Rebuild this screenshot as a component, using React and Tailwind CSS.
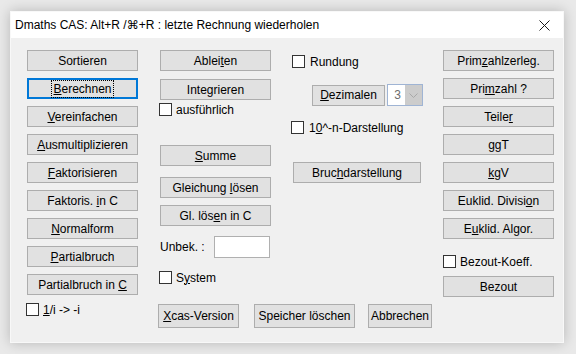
const FONT = { fontFamily: '"Liberation Sans", Arial, "DejaVu Sans", sans-serif' };

function Btn({ children, className = "", focused = false }) {
  return (
    <div
      className={`flex items-center justify-center bg-[#e1e1e1] text-[12px] text-black leading-none select-none whitespace-pre ${
        focused ? "border-2 border-[#0078d7]" : "border border-[#adadad]"
      } ${className}`}
    >
      {focused ? (
        <span className="outline outline-1 outline-dotted outline-black px-[1px] py-[2px]">{children}</span>
      ) : (
        <span>{children}</span>
      )}
    </div>
  );
}

function Check({ children, className = "" }) {
  return (
    <div className={`flex items-center gap-[4px] h-[13px] text-[12px] text-black leading-none whitespace-pre ${className}`}>
      <div className="w-[13px] h-[13px] bg-white border border-[#333333] shrink-0" />
      <span>{children}</span>
    </div>
  );
}

export default function App() {
  return (
    <div className="w-[576px] h-[354px] bg-[#e9e9e9] pt-[11px] pl-[10px] overflow-hidden" style={FONT}>
      <div className="w-[554px] h-[332px] flex flex-col bg-[#f0f0f0] border border-[#f8f8f8] shadow-[0_0_12px_rgba(0,0,0,0.22)]">
        {/* title bar */}
        <div className="h-[26px] bg-white flex items-center justify-between pl-[4px] pr-[13px]">
          <span className="text-[12px] text-black">Dmaths CAS: Alt+R /⌘+R : letzte Rechnung wiederholen</span>
          <svg width="11" height="11" viewBox="0 0 11 11">
            <path d="M0.5 0.5 L10.5 10.5 M10.5 0.5 L0.5 10.5" stroke="#1a1a1a" strokeWidth="1" />
          </svg>
        </div>

        {/* body */}
        <div className="flex pl-[16px] pt-[12px]">
          {/* column 1 */}
          <div className="w-[111px] flex flex-col gap-[7px]">
            <Btn className="h-[21px]">Sortieren</Btn>
            <Btn className="h-[21px]" focused>
              <u>B</u>erechnen
            </Btn>
            <Btn className="h-[21px]">
              <u>V</u>ereinfachen
            </Btn>
            <Btn className="h-[21px]">
              <u>A</u>usmultiplizieren
            </Btn>
            <Btn className="h-[21px]">
              <u>F</u>aktorisieren
            </Btn>
            <Btn className="h-[21px]">
              Faktoris. <u>i</u>n C
            </Btn>
            <Btn className="h-[21px]">
              <u>N</u>ormalform
            </Btn>
            <Btn className="h-[21px]">
              <u>P</u>artialbruch
            </Btn>
            <Btn className="h-[21px]">
              Partialbruch in <u>C</u>
            </Btn>
            <Check className="-ml-px mt-px">
              <u>1</u>/i -&gt; -i
            </Check>
          </div>

          {/* middle area */}
          <div className="ml-[20px] flex flex-col">
            <div className="flex">
              {/* column 2 */}
              <div className="ml-[2px] w-[111px] flex flex-col">
                <Btn className="h-[21px]">
                  Ablei<u>t</u>en
                </Btn>
                <Btn className="h-[21px] mt-[8px]">
                  Inte<u>g</u>rieren
                </Btn>
                <Check className="-ml-px mt-[3px]">ausführlich</Check>
                <Btn className="h-[21px] mt-[29px]">
                  <u>S</u>umme
                </Btn>
                <Btn className="h-[21px] mt-[11px]">
                  Gleichung <u>l</u>ösen
                </Btn>
                <Btn className="h-[21px] mt-[7px]">
                  Gl. lös<u>e</u>n in C
                </Btn>
                <div className="mt-[10px] flex items-center justify-between h-[22px]">
                  <span className="text-[12px] text-black">Unbek. :</span>
                  <div className="w-[56px] h-[22px] bg-white border border-[#b0b0b0] mr-px" />
                </div>
                <Check className="-ml-px mt-[13px]">
                  S<u>y</u>stem
                </Check>
              </div>

              {/* column 3 */}
              <div className="ml-[21px] w-[131px] flex flex-col">
                <Check className="mt-[5px] gap-[5px]">Rundung</Check>
                <div className="mt-[16px] ml-[20px] flex items-center gap-[2px]">
                  <Btn className="w-[73px] h-[21px]">
                    <u>D</u>ezimalen
                  </Btn>
                  <div className="w-[36px] h-[22px] flex border border-[#9fb4d4]">
                    <div className="flex-1 bg-white flex items-center justify-end pr-[4px] text-[12px] text-[#6d6d6d] leading-none">
                      3
                    </div>
                    <div className="w-[17px] bg-[#cccccc] flex items-center justify-center">
                      <svg width="9" height="5" viewBox="0 0 9 5">
                        <path d="M0.5 0.5 L4.5 4.5 L8.5 0.5" fill="none" stroke="#a8a8a8" strokeWidth="1" />
                      </svg>
                    </div>
                  </div>
                </div>
                <Check className="-ml-px mt-[15px] gap-[5px]">
                  1<u>0</u>^-n-Darstellung
                </Check>
                <Btn className="ml-px w-[128px] h-[21px] mt-[28px]">
                  Bruc<u>h</u>darstellung
                </Btn>
              </div>
            </div>

            {/* bottom row */}
            <div className="flex mt-[20px]">
              <Btn className="w-[81px] h-[24px]">
                <u>X</u>cas-Version
              </Btn>
              <Btn className="w-[101px] h-[24px] ml-[15px]">Speicher löschen</Btn>
              <Btn className="w-[64px] h-[24px] ml-[13px]">Abbrechen</Btn>
            </div>
          </div>

          {/* column 4 */}
          <div className="ml-[11px] w-[111px] flex flex-col gap-[7px]">
            <Btn className="h-[21px]">
              Prim<u>z</u>ahlzerleg.
            </Btn>
            <Btn className="h-[21px]">
              Pri<u>m</u>zahl ?
            </Btn>
            <Btn className="h-[21px]">
              Teile<u>r</u>
            </Btn>
            <Btn className="h-[21px]">ggT</Btn>
            <Btn className="h-[21px]">
              <u>k</u>gV
            </Btn>
            <Btn className="h-[21px]">
              Euklid. Divisi<u>o</u>n
            </Btn>
            <Btn className="h-[21px]">
              E<u>u</u>klid. Algor.
            </Btn>
            <Check className="mt-[9px]">Bezout-Koeff.</Check>
            <Btn className="h-[21px] mt-px">Bezout</Btn>
          </div>
        </div>
      </div>
    </div>
  );
}
